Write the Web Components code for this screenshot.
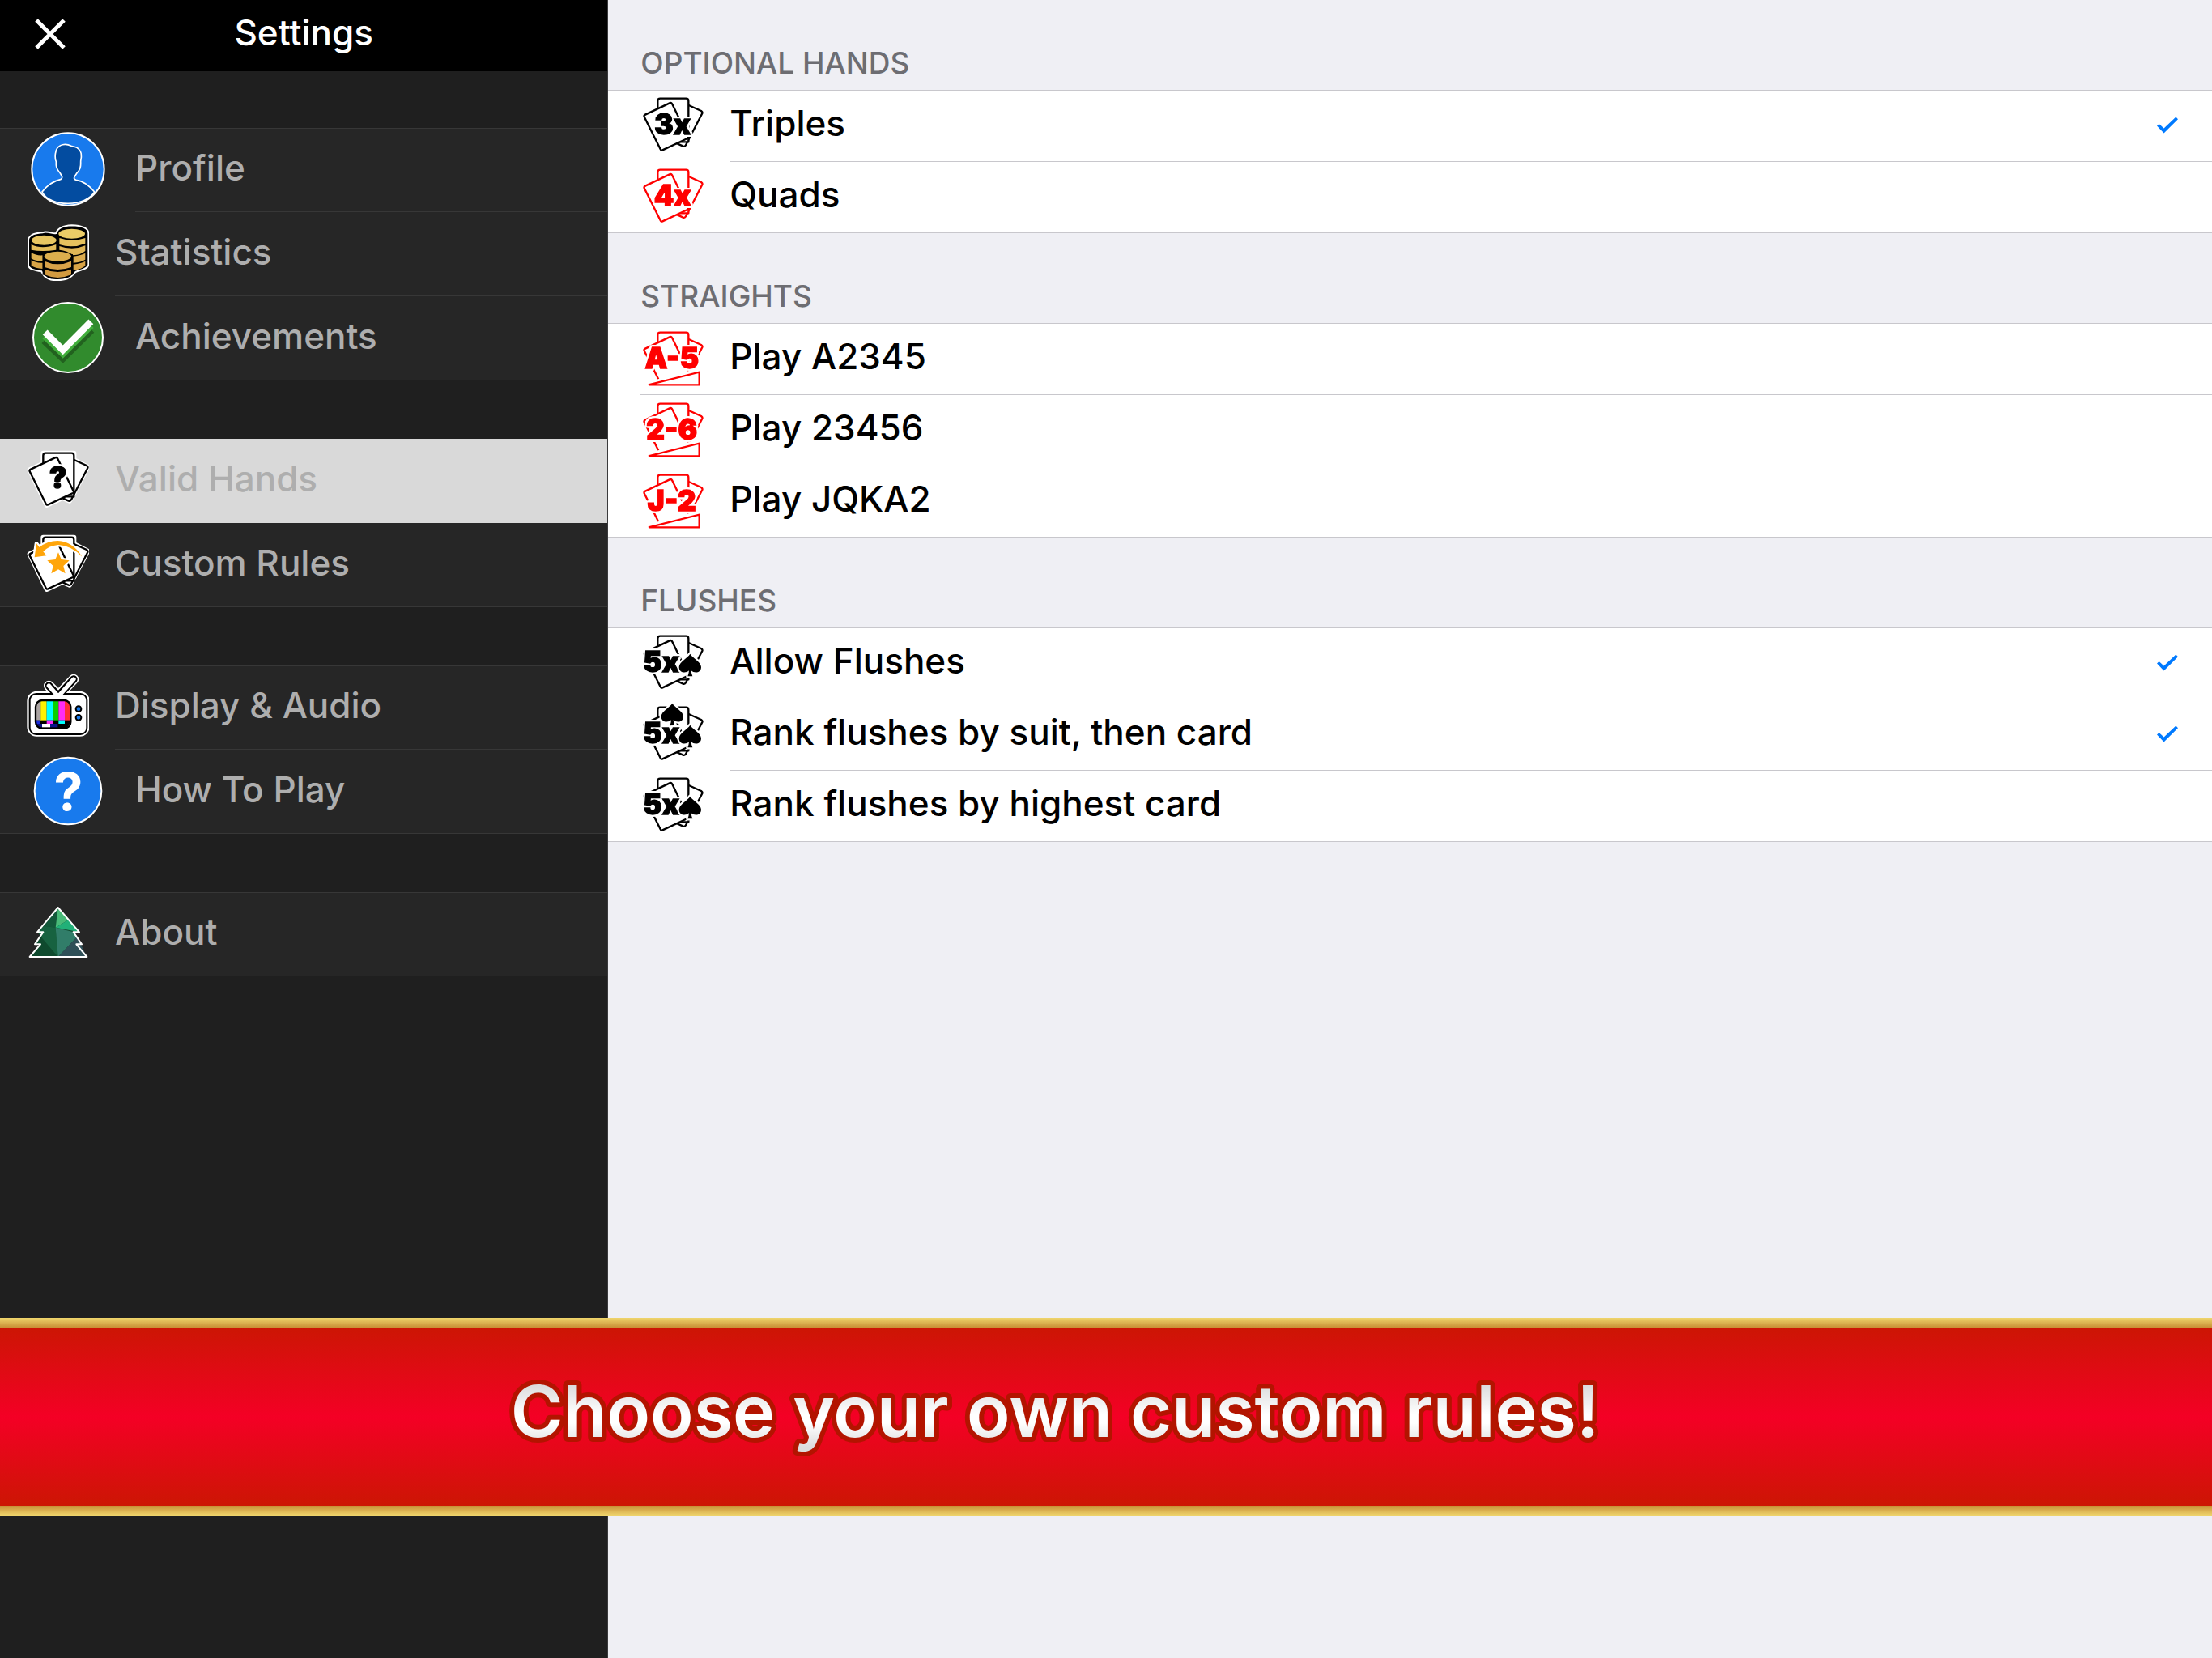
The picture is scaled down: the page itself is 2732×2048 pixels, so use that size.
<!DOCTYPE html>
<html lang="en">
<head>
<meta charset="utf-8">
<meta name="viewport" content="width=device-width, initial-scale=1">
<title>Settings</title>
<style>
html,body{margin:0;height:100%}
body{font:500 44px/1.2 Inter,"Liberation Sans",sans-serif;background:#efeff4;color:#000}
</style>
</head>
<body>
<settings-page>
  <nav-group slot="nav">
    <nav-item icon="profile" href="#profile">Profile</nav-item>
    <nav-item icon="coins" href="#statistics">Statistics</nav-item>
    <nav-item icon="done" href="#achievements">Achievements</nav-item>
  </nav-group>
  <nav-group slot="nav">
    <nav-item icon="valid" href="#hands" selected>Valid Hands</nav-item>
    <nav-item icon="custom" href="#rules">Custom Rules</nav-item>
  </nav-group>
  <nav-group slot="nav">
    <nav-item icon="tv" href="#display">Display &amp; Audio</nav-item>
    <nav-item icon="help" href="#help">How To Play</nav-item>
  </nav-group>
  <nav-group slot="nav">
    <nav-item icon="tree" href="#about">About</nav-item>
  </nav-group>

  <hand-section heading="OPTIONAL HANDS">
    <hand-row mark="3x" checked>Triples</hand-row>
    <hand-row mark="4x" off>Quads</hand-row>
  </hand-section>
  <hand-section heading="STRAIGHTS">
    <hand-row mark="A-5" off wide>Play A2345</hand-row>
    <hand-row mark="2-6" off wide>Play 23456</hand-row>
    <hand-row mark="J-2" off wide>Play JQKA2</hand-row>
  </hand-section>
  <hand-section heading="FLUSHES">
    <hand-row mark="5x" spades="1" checked>Allow Flushes</hand-row>
    <hand-row mark="5x" spades="2" checked>Rank flushes by suit, then card</hand-row>
    <hand-row mark="5x" spades="1">Rank flushes by highest card</hand-row>
  </hand-section>

  <promo-banner slot="banner" text="Choose your own custom rules!"></promo-banner>
</settings-page>

<script>
/* ============ icons ============ */
/* Three fanned cards, shared by the hand rows and two of the menu items. */
var CARDS = '<g stroke-width="7" stroke-linejoin="round" fill="#fff">' +
  '<path d="M172 51 L225 75 Q231 79 229 84 L168 202 Q165 208 158 206 L110 184Z"/>' +
  '<path d="M64 190 V38 Q64 29 73 29 H169 Q178 29 178 38 V190Z"/>' +
  '<path d="M18 89 L108 46 Q114 43 118 50 L177 172 Q178 175 174 177 L82 220 Q77 223 74 217 L14 97 Q12 92 18 89Z"/></g>';
var OUTLINE = '<g stroke="#fff" stroke-width="18" stroke-linejoin="round" fill="#fff">' +
  '<path d="M172 51 L229 80 L162 206 L110 184Z"/><path d="M64 100 V29 H178 V100Z"/><path d="M14 91 L115 44 L179 175 L77 222Z"/></g>';
var SPADE = 'M0-42C9-26 41-13 41 7C41 28 17 32 4 20Q5 33 9 41H-9Q-5 33-4 20C-17 32-41 28-41 7C-41-13-9-26 0-42Z';

var ICONS = {
  profile: ['36 40 309 276', '<circle cx="192" cy="178" r="134" fill="#187aed"/>' +
    '<path d="M96 262 C116 236 136 222 166 215 C174 211 170 204 163 193 C148 175 147 168 148 150 C142 136 144 122 148 108 C158 84 184 82 204 92 C214 94 220 95 225 98 C244 110 243 128 239 148 C240 174 236 180 223 195 C214 208 210 214 222 218 C250 222 272 240 290 262 C262 316 126 322 96 262Z" fill="#034ca0" stroke="#fff" stroke-width="5"/>' +
    '<circle cx="192" cy="178" r="134" fill="none" stroke="#fff" stroke-width="6"/>'],
  done: ['36 664 309 276', '<circle cx="192" cy="802" r="129" fill="#318b2d" stroke="#fff" stroke-width="6"/>' +
    '<g fill="none" stroke-width="25"><path d="M103 814L173 880L280 774" stroke="#22621f"/><path d="M106 797L173 862L278 757" stroke="#41ae3b"/><path d="M107 782L173 848L277 743" stroke="#fff"/></g>'],
  help: ['36 334 309 276', '<circle cx="192" cy="472" r="124" fill="#187aed" stroke="#fff" stroke-width="6"/>' +
    '<text x="193" y="544" text-anchor="middle" font-size="192" font-weight="700" fill="#fff">?</text>'],
  coins: ['36 358 234 261', '<path d="M52 424 C62 410 88 412 104 408 C124 406 138 416 148 412 C156 388 184 384 206 383 C240 384 270 392 268 416 V530 C262 548 236 548 220 556 C200 582 180 586 154 586 C124 588 104 578 94 554 C70 550 46 546 45 530 V436 Q46 428 52 424Z" fill="#000" stroke="#fff" stroke-width="6"/>' +
    '<g fill="#d8a346"><path d="M56 512Q74 524 98 522V544Q70 542 56 532Z"/><path d="M56 484Q74 496 98 494V516Q70 516 56 506Z" fill="#ddb050"/><path d="M56 454Q96 474 148 454V474Q96 482 56 474Z" fill="#e4bd5a"/>' +
    '<path d="M212 528Q242 524 256 516V532Q244 546 212 550Z"/><path d="M212 498Q242 494 256 486V510Q240 520 212 522Z" fill="#dcac4e"/><path d="M160 460Q210 478 256 458V478Q240 492 212 494Q188 476 160 474Z" fill="#e0b656"/><path d="M160 430Q208 446 256 430V450Q208 470 160 454Z" fill="#e6c25e"/></g>' +
    '<ellipse cx="103" cy="438" rx="46" ry="18" fill="#e8c661"/><ellipse cx="206" cy="414" rx="49" ry="18" fill="#eccd67"/>' +
    '<path d="M98 490H210V566Q154 596 98 566Z"/><ellipse cx="154" cy="498" rx="50" ry="18" fill="#dcae4d"/>' +
    '<path d="M105 516Q154 538 204 516V538Q154 556 105 538Z" fill="#d8a148"/><path d="M105 546Q154 566 204 546V566Q154 588 105 566Z" fill="#d29a40"/>'],
  valid: ['0 0 234 261', OUTLINE + '<g stroke="#000">' + CARDS + '</g>' +
    caption('?', 119, 160, 110, '#000')],
  custom: ['0 0 234 261', OUTLINE + '<g stroke="#000">' + CARDS + '</g><g stroke="#fff" stroke-width="14" stroke-linejoin="round" paint-order="stroke" fill="#ffa50a">' +
    '<path d="M32 103 L39 52 L50 66 Q80 42 118 42 Q175 45 208 101 Q170 60 120 57 Q85 60 64 82 L76 97Z"/>' +
    '<path d="M120 85 L131 111 L161 115 L139 135 L146 163 L120 148 L94 163 L101 135 L79 115 L109 111Z"/></g>'],
  tv: ['36 31 234 261', '<g stroke-linejoin="round" stroke-linecap="round"><g stroke="#fff" fill="none"><rect x="50" y="112" width="212" height="148" rx="26" stroke-width="20"/><path d="M121 82L156 118L213 58" stroke-width="38"/></g>' +
    '<path d="M121 82L156 120L213 58" fill="none" stroke="#000" stroke-width="28"/><rect x="50" y="112" width="212" height="150" rx="24" fill="#fff" stroke="#000" stroke-width="6"/><path d="M121 82L156 122L213 58" fill="none" stroke="#fff" stroke-width="16"/></g>' +
    '<clipPath id="scr"><rect x="72" y="136" width="128" height="104" rx="26"/></clipPath><g clip-path="url(#scr)"><rect x="70" y="134" width="134" height="110"/>' +
    '<rect x="70" y="136" width="22" height="74" fill="#aaa3a3"/><rect x="91" y="136" width="22" height="74" fill="#fff200"/><rect x="113" y="136" width="22" height="74" fill="#00ffff"/><rect x="135" y="136" width="22" height="74" fill="#0bd000"/><rect x="157" y="136" width="23" height="74" fill="#ff2cf5"/><rect x="180" y="136" width="22" height="74" fill="#ff2d37"/>' +
    '<rect x="70" y="210" width="20" height="14" fill="#1a2cd8"/><rect x="113" y="210" width="22" height="13" fill="#ff2cf5"/><rect x="157" y="210" width="23" height="13" fill="#00ffff"/><rect x="76" y="223" width="20" height="14" fill="#091080"/><rect x="96" y="223" width="30" height="14" fill="#fff"/><rect x="126" y="223" width="28" height="14" fill="#0a148c"/></g>' +
    '<rect x="72" y="136" width="130" height="104" rx="24" fill="none" stroke="#000" stroke-width="7"/>' +
    '<g fill="#187aed" stroke="#000" stroke-width="6"><circle cx="231" cy="168" r="10"/><circle cx="231" cy="200" r="10"/></g>'],
  tree: ['36 31 234 261', '<path d="M155 64L234 155H212L243 200H223L262 247H50L90 200H69L100 155H78Z" fill="#0f4a2e"/>' +
    '<path d="M155 64L104 133L146 138Z" fill="#13583a"/><path d="M155 64L146 138L196 108Z" fill="#49ba78"/><path d="M196 108L234 155L146 138Z" fill="#22b078"/>' +
    '<path d="M104 133L146 138L155 247L100 182L78 155Z" fill="#176240"/><path d="M146 138L212 155L226 172L155 247Z" fill="#317d69"/><path d="M226 172L262 247H155Z" fill="#2f5058"/>' +
    '<path d="M155 64L234 155H212L243 200H223L262 247H50L90 200H69L100 155H78Z" fill="none" stroke="#fff" stroke-width="6" stroke-linejoin="round"/>']
};

function svg(box, body) {
  const size = box.split(' ');
  return '<svg viewBox="' + box + '" width="' + size[2] / 3 + '" height="' + size[3] / 3 + '" aria-hidden="true">' + body + '</svg>';
}

/* Heavy text with a white halo that cuts it out of the cards behind. The halo
   is a shadow stack, so the stroke stays free to fatten the letters. */
function caption(text, x, y, size, colour) {
  const halo = ['6px 0', '-6px 0', '0 6px', '0 -6px', '5px 5px', '-5px 5px', '5px -5px', '-5px -5px'].map(function (o) {
    return 'drop-shadow(' + o + ' 0 #fff)';
  });
  return '<text x="' + x + '" y="' + y + '" text-anchor="middle" font-size="' + size + '" font-weight="900" fill="' + colour +
    '" stroke="' + colour + '" stroke-width="4" style="filter:' + halo.slice(0, 4).join(' ') + '">' + text + '</text>';
}

/* Cards with a caption over them; straights get a wedge, flushes get spades. */
function handIcon(mark, off, spades) {
  const c = off ? '#f00' : '#000';
  const run = mark.length === 3;
  const halo = ' stroke="#fff" stroke-width="13" stroke-linejoin="round" paint-order="stroke"';
  let body = '<g stroke="' + c + '">' + CARDS + '</g>';
  if (run) body += '<path d="M24 226L220 174V226Z" fill="#fff" stroke="#fff" stroke-width="26"/><path d="M30 223L218 176V223Z" fill="#fff" stroke="' + c + '" stroke-width="7"/>';
  if (spades === 2) body += '<path transform="translate(118 56)" d="' + SPADE + '" fill="#000"' + halo + '/>';
  body += caption(mark, spades ? 77 : run ? 116 : 119, 163, 105, c);
  if (spades) body += '<path transform="translate(184 137)" d="' + SPADE + '" fill="#000"' + halo + '/>';
  return svg(run ? '0 -3 234 261' : '0 0 234 261', body);
}

/* ============ page shell ============ */
class SettingsPage extends HTMLElement {
  connectedCallback() {
    if (this.shadowRoot) return;
    this.attachShadow({ mode: 'open' }).innerHTML = `<style>
      :host{display:flex;min-height:100vh;position:relative}
      aside{width:27.5%;box-sizing:border-box;background:#1f1f1f;border-right:1px solid #3a3a3c}
      header{display:grid;grid-template-columns:118px 1fr 118px;align-items:center;height:88px;box-sizing:border-box;padding-bottom:8px;background:#000;color:#fff}
      h1{margin:0;font:inherit;text-align:center}
      button{display:flex;padding:4px 0 0 43px;border:0;background:none;color:inherit}
      nav{padding-top:70px}
      main{flex:1;min-width:0}
    </style>
    <aside>
      <header>
        <button aria-label="Close"><svg width="38" height="38" viewBox="0 0 38 38"><path d="M2 2L36 36M36 2L2 36" stroke="currentColor" stroke-width="5"/></svg></button>
        <h1>Settings</h1>
      </header>
      <nav><slot name="nav"></slot></nav>
    </aside>
    <main><slot></slot></main>
    <slot name="banner"></slot>`;
  }
}
customElements.define('settings-page', SettingsPage);

/* ============ left menu ============ */
class NavGroup extends HTMLElement {
  connectedCallback() {
    if (this.shadowRoot) return;
    this.attachShadow({ mode: 'open' }).innerHTML = `<style>
      :host{display:block;margin-bottom:72px;background:#262626;box-shadow:inset 0 1px #373737,inset 0 -1px #373737}
      ::slotted(:last-of-type){--line:transparent}
    </style><slot></slot>`;
  }
}
customElements.define('nav-group', NavGroup);

class NavItem extends HTMLElement {
  connectedCallback() {
    if (this.shadowRoot) return;
    const icon = ICONS[this.getAttribute('icon')];
    this.attachShadow({ mode: 'open' }).innerHTML = `<style>
      :host{display:block}
      a{display:flex;align-items:center;gap:32px;height:104px;padding-left:32px;color:#aeaeae;text-decoration:none}
      svg{flex:none;margin-bottom:2px}
      span{display:flex;align-items:center;flex:1;align-self:stretch;box-sizing:border-box;padding-bottom:4px;border-bottom:1px solid var(--line,#373737)}
      :host([selected]){background:#d9d9d9;--line:transparent}
    </style>
    <a href="${this.getAttribute('href')}"${this.hasAttribute('selected') ? ' aria-current="page"' : ''}>${svg(icon[0], icon[1])}<span><slot></slot></span></a>`;
  }
}
customElements.define('nav-item', NavItem);

/* ============ hand options ============ */
class HandSection extends HTMLElement {
  connectedCallback() {
    if (this.shadowRoot) return;
    this.attachShadow({ mode: 'open' }).innerHTML = `<style>
      :host{display:block}
      h2{display:flex;align-items:flex-end;height:112px;margin:0;box-sizing:border-box;padding:0 40px 10px;border-bottom:1px solid #c8c7cc;font-size:37px;line-height:46px;font-weight:500;color:#6d6d72}
      div{background:#fff;box-shadow:inset 0 -1px #c8c7cc}
      ::slotted(:last-of-type){--line:transparent}
    </style><h2>${this.getAttribute('heading')}</h2><div><slot></slot></div>`;
  }
}
customElements.define('hand-section', HandSection);

class HandRow extends HTMLElement {
  connectedCallback() {
    if (this.shadowRoot) return;
    const icon = handIcon(this.getAttribute('mark'), this.hasAttribute('off'), +this.getAttribute('spades'));
    this.attachShadow({ mode: 'open' }).innerHTML = `<style>
      :host{display:block;padding-left:40px}
      label{display:flex;align-items:center;gap:32px;height:88px;box-sizing:border-box}
      svg{flex:none;margin-bottom:2px}
      span{display:flex;align-items:center;flex:1;align-self:stretch;box-sizing:border-box;padding:0 42px 6px 0;border-bottom:1px solid var(--line,#c8c7cc)}
      b{flex:1;font-weight:inherit}
      :host([wide]) label{box-shadow:inset 0 -1px var(--line,#c8c7cc)}
      input{appearance:none;margin:4px 0 0;width:26px;height:20px}
      input:checked{background:#007aff;clip-path:polygon(0 55%,10% 42%,33% 70%,90% 0,100% 14%,33% 100%)}
    </style>
    <label>${icon}<span><b><slot></slot></b><input type="checkbox"${this.hasAttribute('checked') ? ' checked' : ''}></span></label>`;
  }
}
customElements.define('hand-row', HandRow);

/* ============ promo ribbon ============ */
/* Lies over both panes, a fixed distance above the bottom edge. */
class PromoBanner extends HTMLElement {
  connectedCallback() {
    if (this.shadowRoot) return;
    this.attachShadow({ mode: 'open' }).innerHTML = `<style>
      :host{display:block;position:absolute;left:0;right:0;bottom:176px;background:linear-gradient(#c81800,#f40025 50%,#c81800)}
      i{display:block;height:12px;background:linear-gradient(#efd56c,#c88f36)}
      i:last-child{background:linear-gradient(#c88f36,#efd56c)}
      p{margin:0;padding-right:126px;height:220px}
      svg{display:block;width:100%;height:100%}
    </style>
    <i></i>
    <p><svg><defs><linearGradient id="ink" x1="0" y1="0" x2="0" y2="1"><stop offset=".2" stop-color="#dcdcdc"/><stop offset=".54" stop-color="#fff"/><stop offset=".64" stop-color="#fff"/><stop offset=".92" stop-color="#dcdcdc"/></linearGradient></defs>
      <text x="50%" y="135" text-anchor="middle" font-size="88" font-weight="600" fill="url(#ink)" stroke="#b31400" stroke-width="12" stroke-linejoin="round" paint-order="stroke">${this.getAttribute('text')}</text></svg></p>
    <i></i>`;
  }
}
customElements.define('promo-banner', PromoBanner);
</script>
</body>
</html>
